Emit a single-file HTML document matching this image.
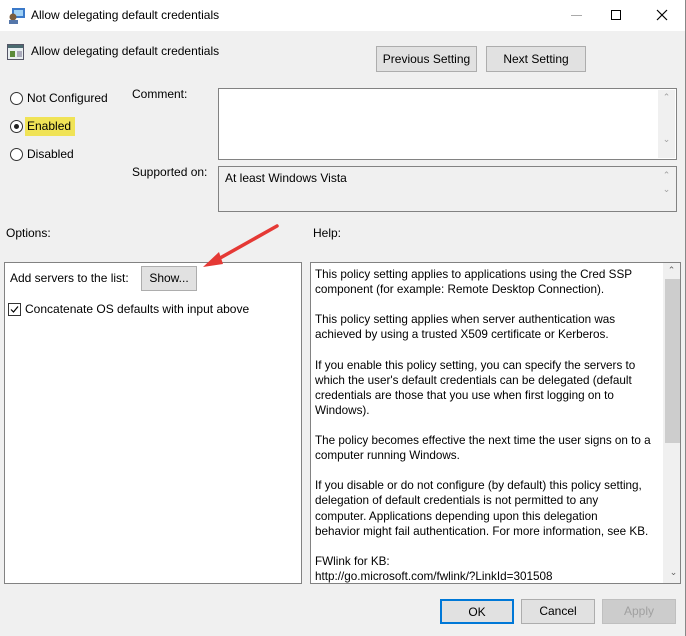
<!DOCTYPE html>
<html><head><meta charset="utf-8"><style>
*{margin:0;padding:0;box-sizing:border-box}
body{width:686px;height:636px;background:#f0f0f0;font-family:"Liberation Sans",sans-serif;font-size:11.5px;color:#000;position:relative;overflow:hidden}
.a{position:absolute;white-space:nowrap}
.btn{position:absolute;background:#e1e1e1;border:1px solid #adadad;text-align:center;font-size:12px}
.box{position:absolute;border:1px solid #828282;background:#fff}
.sb{position:absolute;right:0;top:0;bottom:0;width:17px;background:#f0f0f0;color:#a0a0a0;font-size:9px;text-align:center}
.rad{position:absolute;width:13px;height:13px;border:1px solid #333;border-radius:50%;background:#fff}
</style></head><body>
<div class="a" style="left:0;top:0;width:686px;height:31px;background:#fff"></div>
<svg class="a" style="left:8px;top:7px" width="18" height="18"><rect x="4" y="1" width="13" height="10" fill="#3a79c9"/><rect x="6" y="3" width="9" height="6" fill="#9fd0f5"/><circle cx="5" cy="10" r="3.5" fill="#7a5c3c"/><rect x="1" y="13" width="9" height="4" fill="#5577aa"/></svg>
<div class="a" style="left:31px;top:8px;font-size:12px">Allow delegating default credentials</div>
<div class="a" style="left:571px;top:15px;width:11px;height:1px;background:#aaa"></div>
<div class="a" style="left:611px;top:10px;width:10px;height:10px;border:1px solid #000"></div>
<svg class="a" style="left:656px;top:9px" width="12" height="12"><path d="M1 1L11 11M11 1L1 11" stroke="#000" stroke-width="1.2"/></svg>
<svg class="a" style="left:7px;top:44px" width="17" height="16"><rect x="0.5" y="0.5" width="16" height="15" fill="#e8eef0" stroke="#556"/><rect x="1" y="1" width="15" height="3" fill="#4a6a70"/><rect x="3" y="7" width="5" height="6" fill="#5a8a3a"/><rect x="10" y="7" width="5" height="6" fill="#aab"/></svg>
<div class="a" style="left:31px;top:44px;font-size:12px">Allow delegating default credentials</div>
<div class="btn" style="left:376px;top:46px;width:101px;height:26px;line-height:24px">Previous Setting</div>
<div class="btn" style="left:486px;top:46px;width:100px;height:26px;line-height:24px">Next Setting</div>
<div class="rad" style="left:10px;top:92px"></div><div class="a" style="left:27px;top:91px;font-size:12px">Not Configured</div>
<div class="a" style="left:25px;top:117px;width:50px;height:19px;background:#f0e356"></div>
<div class="rad" style="left:10px;top:120px"></div><div class="a" style="left:14px;top:124px;width:5px;height:5px;border-radius:50%;background:#222"></div><div class="a" style="left:27px;top:119px;font-size:12px">Enabled</div>
<div class="rad" style="left:10px;top:148px"></div><div class="a" style="left:27px;top:147px;font-size:12px">Disabled</div>
<div class="a" style="left:132px;top:87px;font-size:12px">Comment:</div>
<div class="a" style="left:132px;top:165px;font-size:12px">Supported on:</div>
<div class="box" style="left:218px;top:88px;width:459px;height:72px"><div class="sb" style="top:1px;bottom:1px;right:1px;line-height:14px">&#8963;<br><br><br>&#8964;</div></div>
<div class="box" style="left:218px;top:166px;width:459px;height:46px;background:#f0f0f0"><div class="a" style="left:6px;top:4px;font-size:12px">At least Windows Vista</div><div class="sb" style="top:1px;bottom:1px;right:1px;line-height:14px">&#8963;<br>&#8964;</div></div>
<div class="a" style="left:6px;top:226px;font-size:12px">Options:</div>
<div class="a" style="left:313px;top:226px;font-size:12px">Help:</div>
<div class="box" style="left:4px;top:262px;width:298px;height:322px"></div>
<div class="a" style="left:10px;top:271px;font-size:12px">Add servers to the list:</div>
<div class="btn" style="left:141px;top:266px;width:56px;height:25px;line-height:23px">Show...</div>
<div class="a" style="left:8px;top:303px;width:13px;height:13px;border:1px solid #333;background:#fff"></div>
<svg class="a" style="left:9px;top:304px" width="11" height="11"><path d="M2 5.5L4.5 8L9 2.5" stroke="#000" fill="none" stroke-width="1.2"/></svg>
<div class="a" style="left:25px;top:302px;font-size:12px">Concatenate OS defaults with input above</div>
<svg class="a" style="left:195px;top:220px" width="90" height="50"><path d="M82 6L18 42" stroke="#e53935" stroke-width="3.5" stroke-linecap="round"/><path d="M8 47L24 32L28 44Z" fill="#e53935"/></svg>
<div class="box" style="left:310px;top:262px;width:371px;height:322px;overflow:hidden">
<div class="a" style="left:4px;top:4px;line-height:15.1px;font-size:11.7px">This policy setting applies to applications using the Cred SSP<br>component (for example: Remote Desktop Connection).<br><br>This policy setting applies when server authentication was<br>achieved by using a trusted X509 certificate or Kerberos.<br><br>If you enable this policy setting, you can specify the servers to<br>which the user's default credentials can be delegated (default<br>credentials are those that you use when first logging on to<br>Windows).<br><br>The policy becomes effective the next time the user signs on to a<br>computer running Windows.<br><br>If you disable or do not configure (by default) this policy setting,<br>delegation of default credentials is not permitted to any<br>computer. Applications depending upon this delegation<br>behavior might fail authentication. For more information, see KB.<br><br>FWlink for KB:<br>http://go.microsoft.com/fwlink/?LinkId=301508</div>
<div class="sb" style="width:17px;color:#606060;line-height:14px">&#8963;</div>
<div class="a" style="left:354px;top:16px;width:17px;height:164px;background:#cdcdcd"></div>
<div class="a" style="left:354px;top:304px;width:17px;text-align:center;color:#606060;font-size:9px">&#8964;</div>
</div>
<div class="btn" style="left:440px;top:599px;width:74px;height:25px;line-height:23px;border:2px solid #0078d7">OK</div>
<div class="btn" style="left:521px;top:599px;width:74px;height:25px;line-height:23px">Cancel</div>
<div class="btn" style="left:602px;top:599px;width:74px;height:25px;line-height:23px;background:#ccc;border-color:#bfbfbf;color:#a0a0a0">Apply</div>
<div class="a" style="left:685px;top:0;width:1px;height:636px;background:#888"></div>
</body></html>
